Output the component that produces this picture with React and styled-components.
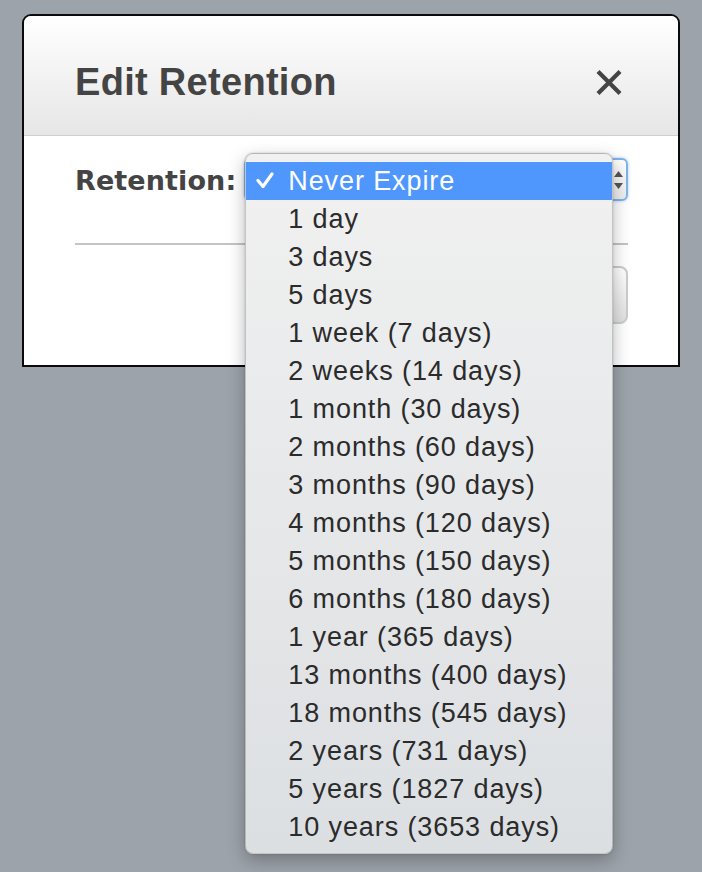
import React from 'react';
import styled, { createGlobalStyle } from 'styled-components';

const GlobalStyle = createGlobalStyle`
  html, body {
    margin: 0;
    padding: 0;
    background: #9ca3aa;
    font-family: 'Liberation Sans', Arial, sans-serif;
  }
`;

const Page = styled.div`
  padding: 14px 22px 0 22px;
  width: 658px;
  min-height: 858px;
`;

const Modal = styled.div`
  position: relative;
  border: 2px solid #0a0a0a;
  border-radius: 9px 9px 0 0;
  background: #fff;
`;

const Header = styled.div`
  display: flex;
  align-items: flex-start;
  justify-content: space-between;
  height: 75px;
  padding: 44px 55px 0 51px;
  border-radius: 7px 7px 0 0;
  border-bottom: 1px solid #cfcfcf;
  background: linear-gradient(to bottom, #ffffff 0%, #e6e6e6 100%);
`;

const Title = styled.h1`
  margin: 0;
  font-size: 38px;
  line-height: 44px;
  font-weight: 700;
  letter-spacing: 0.3px;
  color: #444;
`;

const CloseButton = styled.button`
  margin-top: 8px;
  padding: 0;
  border: none;
  background: none;
  width: 28px;
  height: 29px;
  cursor: pointer;
`;

const Body = styled.div`
  padding: 22px 50px 0 51px;
  height: 207px;
`;

const FieldRow = styled.div`
  display: flex;
  align-items: center;
  gap: 8px;
`;

const Label = styled.label`
  font-family: 'DejaVu Sans', Verdana, sans-serif;
  font-weight: 700;
  font-size: 27px;
  letter-spacing: 0.1px;
  color: #444;
  margin-top: 2px;
`;

const SelectWrap = styled.div`
  position: relative;
  flex: 1;
`;

const SelectBox = styled.div`
  display: flex;
  align-items: center;
  justify-content: flex-end;
  padding-right: 3px;
  height: 39px;
  border: 2px solid #7fb3ea;
  border-radius: 6px;
  box-shadow: 0 0 3px rgba(80, 150, 230, 0.5);
  background: linear-gradient(to bottom, #fff, #ececec);
`;

const Divider = styled.hr`
  margin: 42px 0 0 0;
  border: none;
  border-top: 2px solid #c4c4c4;
`;

const Footer = styled.div`
  display: flex;
  justify-content: flex-end;
  padding-top: 21px;
`;

const Button = styled.button`
  width: 120px;
  height: 58px;
  border: 2px solid #cccccc;
  border-radius: 8px;
  background: linear-gradient(to bottom, #ffffff, #e0e0e0);
`;

const Menu = styled.ul`
  position: absolute;
  left: 1px;
  top: -5px;
  width: 368px;
  margin: 0;
  padding: 8px 0 7px 0;
  list-style: none;
  box-sizing: border-box;
  border-radius: 8px;
  border: 1px solid rgba(0, 0, 0, 0.18);
  background: linear-gradient(to bottom, #f1f1f1 0%, #dcdfe2 100%);
  box-shadow: 0 6px 18px rgba(0, 0, 0, 0.28), 0 0 2px rgba(0, 0, 0, 0.2);
  z-index: 10;
`;

const Option = styled.li`
  position: relative;
  height: 38px;
  line-height: 38px;
  padding-left: 42px;
  font-size: 27px;
  letter-spacing: 0.9px;
  color: ${props => (props.selected ? '#fff' : '#2b2b2b')};
  background: ${props => (props.selected ? '#4f97fd' : 'transparent')};
  white-space: nowrap;
`;

const CheckMark = styled.svg`
  position: absolute;
  left: 10px;
  top: 10px;
`;

const options = [
  'Never Expire',
  '1 day',
  '3 days',
  '5 days',
  '1 week (7 days)',
  '2 weeks (14 days)',
  '1 month (30 days)',
  '2 months (60 days)',
  '3 months (90 days)',
  '4 months (120 days)',
  '5 months (150 days)',
  '6 months (180 days)',
  '1 year (365 days)',
  '13 months (400 days)',
  '18 months (545 days)',
  '2 years (731 days)',
  '5 years (1827 days)',
  '10 years (3653 days)',
];

const CloseIcon = () => (
  <svg width="28" height="29" viewBox="0 0 28 29">
    <path d="M3 3.5 L25 25.5 M25 3.5 L3 25.5" stroke="#444" strokeWidth="4.2" strokeLinecap="butt" />
  </svg>
);

const Arrows = () => (
  <svg width="9" height="18" viewBox="0 0 9 18">
    <path d="M4.5 0 L9 6 H0 Z M4.5 18 L9 12 H0 Z" fill="#555" />
  </svg>
);

const App = () => {
  const selected = 0;
  return (
    <Page>
      <GlobalStyle />
      <Modal>
        <Header>
          <Title>Edit Retention</Title>
          <CloseButton aria-label="Close">
            <CloseIcon />
          </CloseButton>
        </Header>
        <Body>
          <FieldRow>
            <Label>Retention:</Label>
            <SelectWrap>
              <SelectBox>
                <Arrows />
              </SelectBox>
              <Menu>
                {options.map((opt, i) => (
                  <Option key={opt} selected={i === selected}>
                    {i === selected && (
                      <CheckMark width="18" height="17" viewBox="0 0 18 17">
                        <path d="M2 8.5 L7 14.5 L16 2" fill="none" stroke="#fff" strokeWidth="3.2" strokeLinecap="round" strokeLinejoin="round" />
                      </CheckMark>
                    )}
                    {opt}
                  </Option>
                ))}
              </Menu>
            </SelectWrap>
          </FieldRow>
          <Divider />
          <Footer>
            <Button />
          </Footer>
        </Body>
      </Modal>
    </Page>
  );
};

export default App;
